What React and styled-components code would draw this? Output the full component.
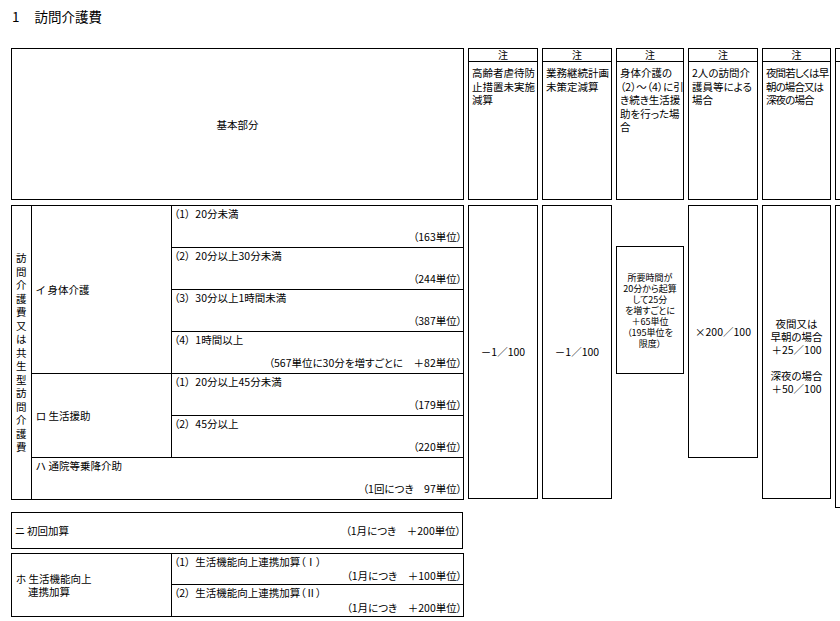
import styled, { createGlobalStyle } from "styled-components";

const GlobalStyle = createGlobalStyle`
  html, body {
    margin: 0;
    padding: 0;
    background: #fff;
  }
  body {
    overflow: hidden;
    color: #000;
    font-family: "Noto Sans CJK JP", "Noto Sans", sans-serif;
    font-size: 10.5px;
    font-feature-settings: "palt";
  }
`;

const Page = styled.div`
  width: 840px;
  height: 621px;
  overflow: hidden;
  box-sizing: border-box;
  padding: 8px 0 0 11px;
`;

const Title = styled.h1`
  margin: 0 0 24px 1px;
  font-size: 13.5px;
  font-weight: normal;
  line-height: 16px;
  white-space: nowrap;
`;

const TitleNo = styled.span`
  margin-right: 15px;
`;

const Row = styled.div`
  display: flex;
  align-items: flex-start;
  gap: 4px;
  margin-top: ${(p) => p.$top || 0}px;
`;

const BaseHead = styled.div`
  flex: none;
  width: 453px;
  height: 152px;
  box-sizing: border-box;
  border: 1px solid #000;
  display: flex;
  align-items: center;
  justify-content: center;
`;

const NoteHead = styled.div`
  flex: none;
  width: ${(p) => p.$w}px;
  height: 152px;
  box-sizing: border-box;
  border: 1px solid #000;
  display: flex;
  flex-direction: column;
`;

const NoteLabel = styled.div`
  height: 12px;
  border-bottom: 1px solid #000;
  font-size: 10px;
  line-height: 12px;
  text-align: center;
`;

const NoteText = styled.div`
  padding: 4px 0 0 3px;
  line-height: 13.5px;
  white-space: nowrap;
  letter-spacing: ${(p) => (p.$tight ? "-0.9px" : "0")};
`;

const MainCol = styled.div`
  flex: none;
  display: flex;
  flex-direction: column;
`;

const Grid = styled.table`
  width: 452px;
  border-collapse: collapse;
  table-layout: fixed;
  margin-top: ${(p) => p.$top || 0}px;
`;

const Col = styled.col`
  width: ${(p) => p.$w}px;
`;

const Tr = styled.tr`
  height: ${(p) => p.$h}px;
`;

const Cell = styled.td`
  border: 1px solid #000;
  padding: 0;
  vertical-align: middle;
  white-space: nowrap;
`;

const Vertical = styled.div`
  width: 11px;
  margin: 0 auto;
  line-height: 13.5px;
  white-space: normal;
  word-break: break-all;
`;

const GroupLabel = styled.div`
  padding-left: 4px;
  line-height: 13px;
`;

const Indent = styled.div`
  padding-left: 12px;
`;

const Item = styled.div`
  height: ${(p) => p.$h}px;
  box-sizing: border-box;
  padding: ${(p) => p.$pad || "1px 1px 3px 2px"};
  display: flex;
  flex-direction: column;
  justify-content: space-between;
  line-height: 14px;
`;

const Inline = styled.div`
  height: ${(p) => p.$h}px;
  padding: 0 1px 0 3px;
  display: flex;
  align-items: center;
  justify-content: space-between;
`;

const Amount = styled.div`
  text-align: right;
`;

const Num = styled.span`
  margin-right: 5px;
`;

const NoteBody = styled.div`
  flex: none;
  width: ${(p) => p.$w}px;
  height: ${(p) => p.$h}px;
  margin-top: ${(p) => p.$top || 0}px;
  box-sizing: border-box;
  border: 1px solid #000;
  padding-top: ${(p) => p.$shift || 0}px;
  display: flex;
  align-items: center;
  justify-content: center;
  text-align: center;
  white-space: nowrap;
  font-size: ${(p) => p.$size || 10.5}px;
  line-height: ${(p) => p.$lh || 14}px;
`;

const notes = [
  { w: 70, lines: ["高齢者虐待防", "止措置未実施", "減算"] },
  { w: 70, lines: ["業務継続計画", "未策定減算"] },
  { w: 68, lines: ["身体介護の", "（2）～（4）に引", "き続き生活援", "助を行った場", "合"] },
  { w: 70, lines: ["2人の訪問介", "護員等による", "場合"] },
  { w: 69, lines: ["夜間若しくは早", "朝の場合又は", "深夜の場合"], tight: true },
  { w: 70, lines: [] },
];

const physical = [
  { no: "（1）", label: "20分未満", amount: "（163単位）" },
  { no: "（2）", label: "20分以上30分未満", amount: "（244単位）" },
  { no: "（3）", label: "30分以上1時間未満", amount: "（387単位）" },
  { no: "（4）", label: "1時間以上", amount: "（567単位に30分を増すごとに　＋82単位）" },
];

const living = [
  { no: "（1）", label: "20分以上45分未満", amount: "（179単位）" },
  { no: "（2）", label: "45分以上", amount: "（220単位）" },
];

const linkage = [
  { no: "（1）", label: "生活機能向上連携加算（Ⅰ）", amount: "（1月につき　＋100単位）", h: 30 },
  { no: "（2）", label: "生活機能向上連携加算（Ⅱ）", amount: "（1月につき　＋200単位）", h: 31 },
];

function Lines({ lines }) {
  return lines.map((l, i) => <div key={i}>{l || "\u00a0"}</div>);
}

function ItemCell({ item, h = 41, pad }) {
  return (
    <Item $h={h} $pad={pad}>
      <div>
        <Num>{item.no}</Num>
        {item.label}
      </div>
      <Amount>{item.amount}</Amount>
    </Item>
  );
}

export default function App() {
  return (
    <>
      <GlobalStyle />
      <Page>
        <Title>
          <TitleNo>1</TitleNo>訪問介護費
        </Title>

        <Row>
          <BaseHead>基本部分</BaseHead>
          {notes.map((n, i) => (
            <NoteHead key={i} $w={n.w}>
              <NoteLabel>注</NoteLabel>
              <NoteText $tight={n.tight}>
                <Lines lines={n.lines} />
              </NoteText>
            </NoteHead>
          ))}
        </Row>

        <Row $top={5}>
          <MainCol>
            <Grid>
              <colgroup>
                <Col $w={20} />
                <Col $w={140} />
                <Col $w={292} />
              </colgroup>
              <tbody>
                {physical.map((item, i) => (
                  <Tr key={item.no} $h={42}>
                    {i === 0 && (
                      <>
                        <Cell rowSpan={7}>
                          <Vertical>訪問介護費又は共生型訪問介護費</Vertical>
                        </Cell>
                        <Cell rowSpan={4}>
                          <GroupLabel>イ 身体介護</GroupLabel>
                        </Cell>
                      </>
                    )}
                    <Cell>
                      <ItemCell item={item} />
                    </Cell>
                  </Tr>
                ))}
                {living.map((item, i) => (
                  <Tr key={item.no} $h={42}>
                    {i === 0 && (
                      <Cell rowSpan={2}>
                        <GroupLabel>ロ 生活援助</GroupLabel>
                      </Cell>
                    )}
                    <Cell>
                      <ItemCell item={item} />
                    </Cell>
                  </Tr>
                ))}
                <Tr $h={42}>
                  <Cell colSpan={2}>
                    <Item $h={41} $pad="1px 1px 3px 4px">
                      <div>ハ 通院等乗降介助</div>
                      <Amount>（1回につき　97単位）</Amount>
                    </Item>
                  </Cell>
                </Tr>
              </tbody>
            </Grid>

            <Grid $top={12}>
              <tbody>
                <Tr $h={36}>
                  <Cell>
                    <Inline $h={35}>
                      <div>ニ 初回加算</div>
                      <div>（1月につき　＋200単位）</div>
                    </Inline>
                  </Cell>
                </Tr>
              </tbody>
            </Grid>

            <Grid $top={4}>
              <colgroup>
                <Col $w={160} />
                <Col $w={292} />
              </colgroup>
              <tbody>
                {linkage.map((item, i) => (
                  <Tr key={item.no} $h={item.h + 1}>
                    {i === 0 && (
                      <Cell rowSpan={2}>
                        <GroupLabel>
                          <div>ホ 生活機能向上</div>
                          <Indent>連携加算</Indent>
                        </GroupLabel>
                      </Cell>
                    )}
                    <Cell>
                      <ItemCell item={item} h={item.h} pad="1px 1px 1px 2px" />
                    </Cell>
                  </Tr>
                ))}
              </tbody>
            </Grid>
          </MainCol>

          <NoteBody $w={70} $h={294}>－1／100</NoteBody>
          <NoteBody $w={70} $h={294}>－1／100</NoteBody>
          <NoteBody $w={68} $h={128} $top={41} $size={9} $lh={11}>
            <div>
              <Lines
                lines={[
                  "所要時間が",
                  "20分から起算",
                  "して25分",
                  "を増すごとに",
                  "＋65単位",
                  "（195単位を",
                  "限度）",
                ]}
              />
            </div>
          </NoteBody>
          <NoteBody $w={70} $h={253}>×200／100</NoteBody>
          <NoteBody $w={69} $h={294} $lh={13} $shift={7}>
            <div>
              <Lines
                lines={["夜間又は", "早朝の場合", "＋25／100", "", "深夜の場合", "＋50／100"]}
              />
            </div>
          </NoteBody>
          <NoteBody $w={70} $h={303} />
        </Row>
      </Page>
    </>
  );
}
